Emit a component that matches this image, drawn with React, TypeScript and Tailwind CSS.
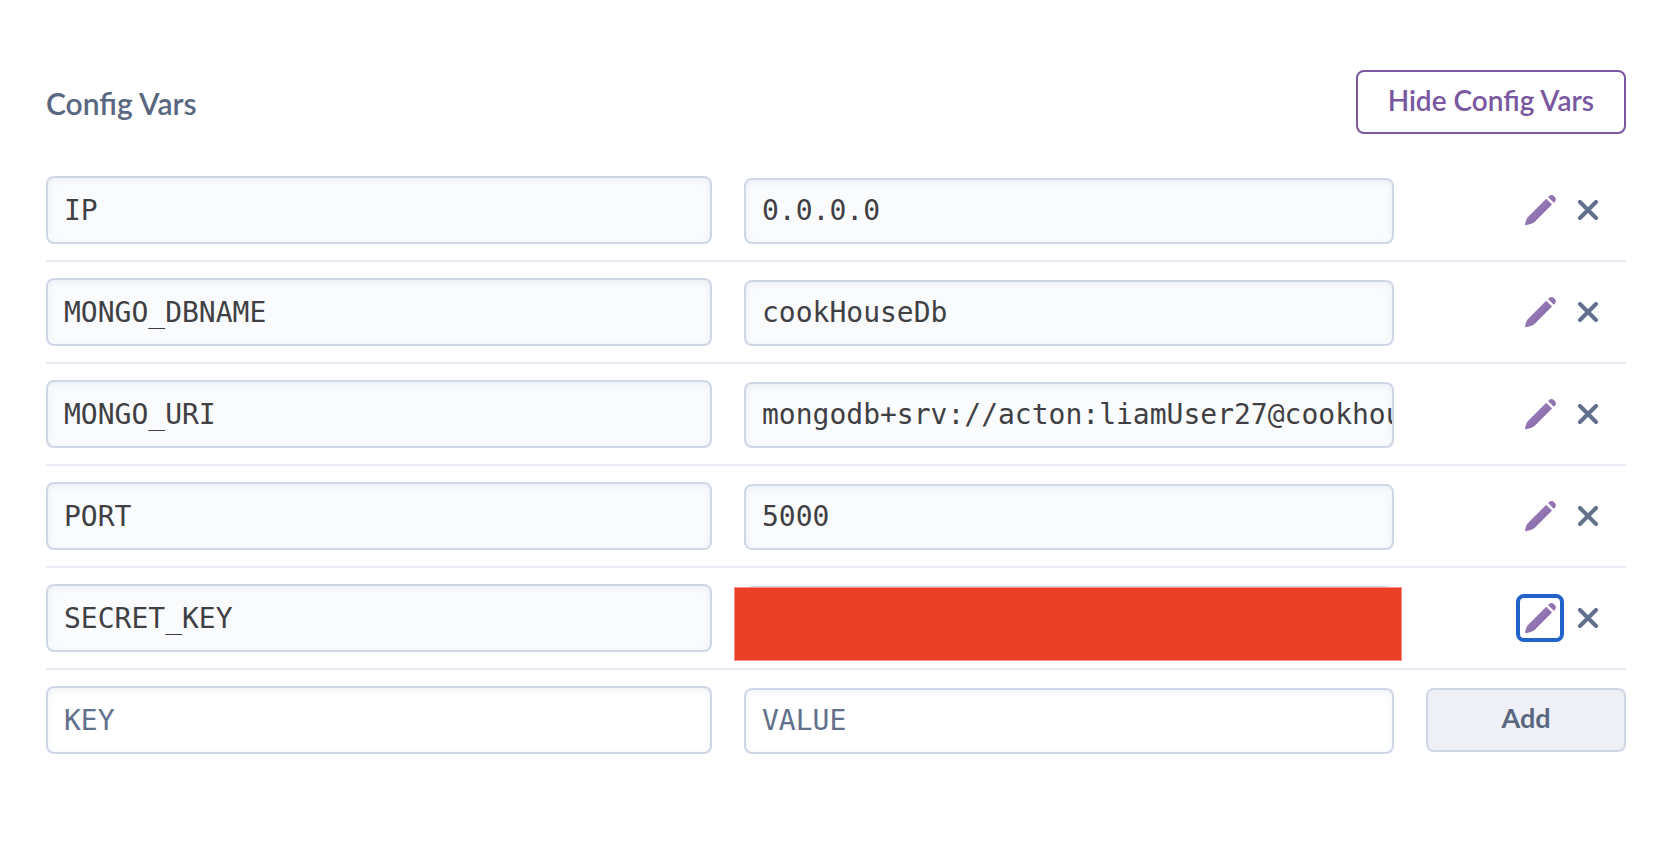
import { useId } from "react";

type ConfigVar = {
  name: string;
  value: string;
  redacted?: boolean;
  focused?: boolean;
};

const configVars: ConfigVar[] = [
  { name: "IP", value: "0.0.0.0" },
  { name: "MONGO_DBNAME", value: "cookHouseDb" },
  { name: "MONGO_URI", value: "mongodb+srv://acton:liamUser27@cookhouse" },
  { name: "PORT", value: "5000" },
  { name: "SECRET_KEY", value: "", redacted: true, focused: true },
];

const rowClass = "grid grid-cols-[666fr_650fr_200px] gap-8 py-4";

const fieldClass =
  "block w-full min-w-0 rounded-lg border-2 border-[#cfd7e6] pl-4 pr-0 font-['DejaVu_Sans_Mono',monospace] text-[28px] text-[#3f3f44] shadow-[inset_0_2px_6px_rgba(207,215,230,0.35)] outline-none placeholder:text-[#62708c] placeholder:opacity-100";

function PencilIcon() {
  const gradient = useId();
  return (
    <svg viewBox="0 0 32 32" className="size-8" aria-hidden="true">
      <defs>
        <linearGradient id={gradient} x1="0" y1="0" x2="1" y2="1">
          <stop offset="0" stopColor="#a58cc4" />
          <stop offset="1" stopColor="#7d5ba0" />
        </linearGradient>
      </defs>
      <path
        fill={`url(#${gradient})`}
        d="M22.2 4.8 28 10.6 11 27.6C8.8 29.6 5 31 1 31.3 1.3 28 2.4 24.6 4.2 22.8ZM24 3 25.1 1.9A3.6 3.6 0 0 1 28 0.9C29.7 1.5 31.2 2.9 31.8 4.7A3.6 3.6 0 0 1 30.9 7.7L29.8 8.8Z"
      />
    </svg>
  );
}

function CrossIcon() {
  return (
    <svg viewBox="0 0 20 20" className="size-5" aria-hidden="true">
      <path d="M2 2 18 18M18 2 2 18" stroke="#62708c" strokeWidth="4" strokeLinecap="round" />
    </svg>
  );
}

function ConfigVarRow({ item }: { item: ConfigVar }) {
  return (
    <li className={`${rowClass} border-b-2 border-[#e6eaf1]`}>
      <input
        type="text"
        readOnly
        aria-label={`${item.name} key`}
        defaultValue={item.name}
        className={`${fieldClass} h-[68px] bg-[#fafbfd]`}
      />
      <div className="relative self-end">
        <input
          type="text"
          readOnly
          aria-label={`${item.name} value`}
          defaultValue={item.value}
          className={`${fieldClass} h-[66px] bg-[#fafbfd] pb-0.5`}
        />
        {item.redacted && (
          <div className="absolute -bottom-[9px] -left-[10px] -right-2 top-px border border-[#f3907f] bg-[#eb4027]" />
        )}
      </div>
      <div className="flex items-center justify-end pr-[14px]">
        <button
          type="button"
          aria-label={`Edit ${item.name}`}
          className={`flex size-12 items-center justify-center rounded-lg border-4 ${
            item.focused ? "border-[#2262c9]" : "border-transparent"
          }`}
        >
          <PencilIcon />
        </button>
        <button
          type="button"
          aria-label={`Remove ${item.name}`}
          className="flex size-12 items-center justify-center"
        >
          <CrossIcon />
        </button>
      </div>
    </li>
  );
}

export default function App() {
  return (
    <main className="min-h-screen bg-white px-[46px] pt-[70px] pr-11 font-['Lato',sans-serif]">
      <header className="flex items-center justify-between">
        <h1 className="pt-0.5 text-[30px] font-semibold text-[#596780]">Config Vars</h1>
        <button
          type="button"
          className="h-16 rounded-lg border-2 border-[#79589f] bg-white px-[30px] pb-1 text-[28px] font-semibold text-[#79589f]"
        >
          Hide Config Vars
        </button>
      </header>

      <ul className="mt-[26px]">
        {configVars.map((item) => (
          <ConfigVarRow key={item.name} item={item} />
        ))}
      </ul>

      <form className={rowClass} onSubmit={(event) => event.preventDefault()}>
        <input
          type="text"
          aria-label="New key"
          placeholder="KEY"
          className={`${fieldClass} h-[68px] bg-white`}
        />
        <input
          type="text"
          aria-label="New value"
          placeholder="VALUE"
          className={`${fieldClass} h-[66px] self-end bg-white pb-0.5`}
        />
        <button
          type="submit"
          className="h-16 self-center rounded-lg border-2 border-[#cfd7e6] bg-[#eff0f5] pb-1 text-[27px] font-bold text-[#596780]"
        >
          Add
        </button>
      </form>
    </main>
  );
}
